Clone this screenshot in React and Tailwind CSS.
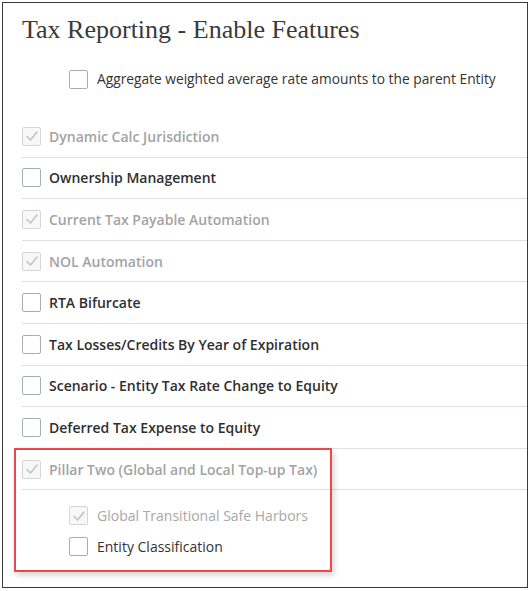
import React from 'react';

const features = [
  { label: 'Dynamic Calc Jurisdiction', checked: true },
  { label: 'Ownership Management', checked: false },
  { label: 'Current Tax Payable Automation', checked: true },
  { label: 'NOL Automation', checked: true },
  { label: 'RTA Bifurcate', checked: false },
  { label: 'Tax Losses/Credits By Year of Expiration', checked: false },
  { label: 'Scenario - Entity Tax Rate Change to Equity', checked: false },
  { label: 'Deferred Tax Expense to Equity', checked: false },
  { label: 'Pillar Two (Global and Local Top-up Tax)', checked: true },
];

const subFeatures = [
  { label: 'Global Transitional Safe Harbors', checked: true },
  { label: 'Entity Classification', checked: false },
];

const Box = ({ checked }) =>
  checked ? (
    <span className="flex h-[19px] w-[19px] shrink-0 items-center justify-center rounded-[2px] border border-[#d6d6d6] bg-[#f8f8f8]">
      <svg width="14" height="14" viewBox="0 0 14 14" fill="none">
        <path d="M2 7.5 L5.5 11 L12 3" stroke="#c4c4c4" strokeWidth="1.6" strokeLinecap="round" strokeLinejoin="round" />
      </svg>
    </span>
  ) : (
    <span className="h-[19px] w-[19px] shrink-0 rounded-[2px] border border-[#a7adb5] bg-white" />
  );

export default function App() {
  return (
    <div className="bg-white p-[2px] font-['Open_Sans',sans-serif]">
      <div className="relative h-[586px] w-[526px] border border-[#3a3a3a]">
        <h1 className="ml-[19px] mt-[13px] font-['Liberation_Serif',serif] text-[26px] leading-[28px] text-[#3a3a3a]">
          Tax Reporting - Enable Features
        </h1>

        <div className="ml-[66px] mt-[22px] flex h-[26px] items-center gap-[9px]">
          <Box checked={false} />
          <span className="text-[13.75px] text-[#333]">Aggregate weighted average rate amounts to the parent Entity</span>
        </div>

        <div className="ml-[19px] mt-[24px] flex flex-col">
          {features.map(f => (
            <div key={f.label} className="flex h-[41.6px] items-center gap-[8px] border-b border-[#dde1e7]">
              <Box checked={f.checked} />
              <span className={`text-[14px] font-semibold ${f.checked ? 'text-[#a3a3a3]' : 'text-[#2f2f2f]'}`}>{f.label}</span>
            </div>
          ))}
        </div>

        <div className="ml-[66px] mt-[16px] flex flex-col gap-[12px]">
          {subFeatures.map(f => (
            <div key={f.label} className="flex h-[19px] items-center gap-[9px]">
              <Box checked={f.checked} />
              <span className={`text-[14px] ${f.checked ? 'text-[#a8a8a8]' : 'text-[#333]'}`}>{f.label}</span>
            </div>
          ))}
        </div>

        <div className="absolute left-[11px] top-[445px] h-[124px] w-[318px] border-2 border-[#e8484e] shadow-[2px_3px_6px_rgba(0,0,0,0.18)]" />
      </div>
    </div>
  );
}
